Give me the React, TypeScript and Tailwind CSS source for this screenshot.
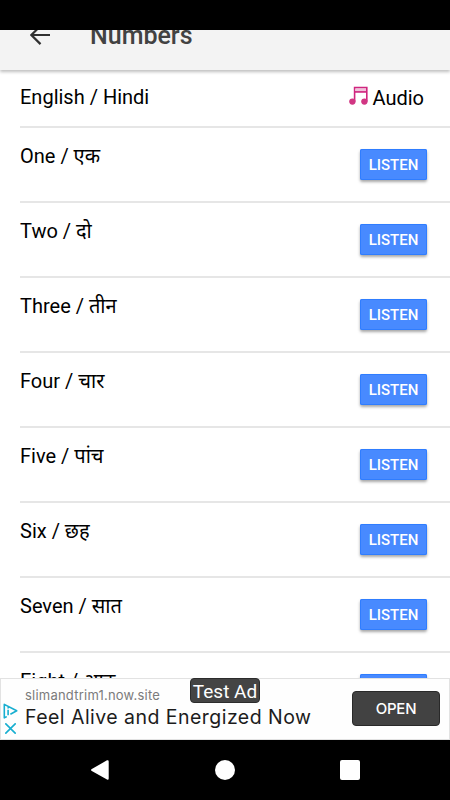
import React from 'react';

const numbers = [
    { english: 'One', hindi: 'एक' },
    { english: 'Two', hindi: 'दो' },
    { english: 'Three', hindi: 'तीन' },
    { english: 'Four', hindi: 'चार' },
    { english: 'Five', hindi: 'पांच' },
    { english: 'Six', hindi: 'छह' },
    { english: 'Seven', hindi: 'सात' },
    { english: 'Eight', hindi: 'आठ' },
];

function Header() {
    return (
        <header className="relative z-10 h-10 shrink-0 bg-[#f3f3f3] shadow-[0_2px_3px_rgba(0,0,0,0.25)]">
            <div className="flex h-full items-start overflow-hidden pl-[30px]">
                <svg className="-mt-[5px] h-5 w-5 shrink-0" viewBox="0 0 20 20" fill="none" stroke="#303030" strokeWidth="2.2">
                    <path d="M20 10H1.6M10.5 .9L1.4 10l9.1 9.1" />
                </svg>
                <h1 className="-mt-[11px] ml-10 text-[25px] leading-[34px] font-medium text-[#424242]">Numbers</h1>
            </div>
        </header>
    );
}

function MusicNotes() {
    return (
        <svg className="h-[19px] w-[19px]" viewBox="0 0 19 19" fill="none">
            <path d="M5.6 15.5V1.6h12.2v14M5.6 5.9h12.2" stroke="#d0267f" strokeWidth="1.6" />
            <path d="M6.4 2.4h10.6v2.7H6.4z" fill="#f0c2da" />
            <ellipse cx="3.4" cy="15.6" rx="3.2" ry="3.1" fill="#d13683" />
            <ellipse cx="15.4" cy="15.6" rx="3.2" ry="3.1" fill="#d13683" />
        </svg>
    );
}

function NumberRow({ english, hindi }: { english: string; hindi: string }) {
    return (
        <li className="ml-5 flex h-[75px] shrink-0 items-start justify-between border-b-2 border-[#e6e6e6] pr-[23px]">
            <span className="mt-[13px] text-xl leading-[30px] whitespace-nowrap">{english} / {hindi}</span>
            <button className="mt-[21px] h-[31px] w-[67px] rounded-[2px] bg-[#488aff] text-[15px] leading-[32px] font-medium text-white shadow-[0_2px_3px_rgba(0,0,0,0.35),inset_0_0_0_1px_#2f7dff]">
                LISTEN
            </button>
        </li>
    );
}

function AdBanner() {
    return (
        <aside className="relative flex h-[62px] shrink-0 items-start border border-[#e2e2e2] bg-[#fefefe] pl-px font-[Inter,sans-serif]">
            <div className="mt-[24px] flex w-[23px] shrink-0 flex-col items-start gap-[4px] pl-px">
                <svg className="h-4 w-[15px]" viewBox="0 0 15 16" fill="none" stroke="#17aed0" strokeWidth="1.6" strokeLinejoin="round">
                    <path d="M3.8 13.6L1.3 14.8V1.4L13.7 7.8 7.4 11.2M5.1 6.8v5.4M5.1 4.2v1.4" />
                </svg>
                <svg className="ml-[2px] h-[11px] w-[11px]" viewBox="0 0 11 11" stroke="#17aed0" strokeWidth="1.6">
                    <path d="M.3.3l10.4 10.4M10.7.3L.3 10.7" />
                </svg>
            </div>
            <div className="flex flex-col whitespace-nowrap">
                <span className="mt-[7px] text-[13px] leading-[18px] tracking-[0.22px] text-[#7b7b7b]">slimandtrim1.now.site</span>
                <span className="mt-px text-[19.5px] leading-[24px] tracking-[0.46px] text-[#1c1c1c]">Feel Alive and Energized Now</span>
            </div>
            <button className="mt-[12px] mr-[9px] ml-auto h-[35px] w-[88px] rounded-[4px] border border-[#292929] bg-[#424242] text-[15px] leading-[32px] font-medium tracking-[-0.2px] text-white">
                OPEN
            </button>
            <span className="absolute -top-px left-[189px] h-[25px] w-[70px] rounded-[4px] border border-[#2c2c2c] bg-[#444] text-center font-[Roboto,sans-serif] text-[19px] leading-[25px] whitespace-nowrap text-white">
                Test Ad
            </span>
        </aside>
    );
}

function NavigationBar() {
    return (
        <nav className="flex h-[60px] shrink-0 items-center bg-black pl-[90px]">
            <svg className="h-5 w-5" viewBox="0 0 20 20" fill="white">
                <path d="M1.8 9.1L17 .3Q18.7 -.3 18.7 1.5V18.5Q18.7 20.3 17 19.6L1.8 10.9Q.2 10 1.8 9.1Z" />
            </svg>
            <span className="ml-[105px] h-5 w-5 rounded-full bg-white" />
            <span className="ml-[105px] h-5 w-5 rounded-[2px] bg-white" />
        </nav>
    );
}

export default function App() {
    return (
        <div className="flex h-[800px] w-[450px] flex-col overflow-hidden bg-white font-[Roboto,'Noto_Sans',sans-serif] text-black">
            <div className="h-[30px] shrink-0 bg-black" />
            <Header />
            <main className="flex min-h-0 flex-1 flex-col overflow-hidden">
                <div className="ml-5 flex h-[58px] shrink-0 items-start justify-between border-b-2 border-[#e6e6e6] pr-[26px] text-xl">
                    <span className="mt-[12px] leading-[30px]">English / Hindi</span>
                    <span className="mt-[16px] flex items-start gap-[4px]">
                        <MusicNotes />
                        <span className="-mt-[3px] leading-[30px]">Audio</span>
                    </span>
                </div>
                <ul className="flex flex-col">
                    {numbers.map((item) => (
                        <NumberRow key={item.english} {...item} />
                    ))}
                </ul>
            </main>
            <AdBanner />
            <NavigationBar />
        </div>
    );
}
